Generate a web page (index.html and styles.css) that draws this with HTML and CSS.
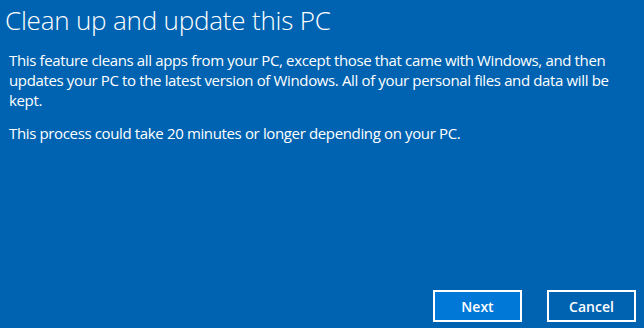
FILE: index.html
```html
<!DOCTYPE html>
<html>
<head>
    <title>Clean up and update this PC</title>
    <link rel="stylesheet" href="styles.css">
</head>
<body>
    <div class="dialog">
        <div class="content">
            <h1>Clean up and update this PC</h1>
            <p>This feature cleans all apps from your PC, except those that came with Windows, and then updates your PC to the latest version of Windows. All of your personal files and data will be kept.</p>
            <p>This process could take 20 minutes or longer depending on your PC.</p>
        </div>
        <div class="button-group">
            <button type="button" class="next-btn">Next</button>
            <button type="button" class="cancel-btn">Cancel</button>
        </div>
    </div>
</body>
</html>
```

FILE: styles.css
```css
html, body {
    margin: 0;
    padding: 0;
    height: 100%;
}
body {
    font-family: "Open Sans", "Noto Sans", sans-serif;
    background-color: #0063b1;
    color: #fff;
}
.dialog {
    display: flex;
    flex-direction: column;
    height: 100%;
    box-sizing: border-box;
}
.content {
    flex: 1;
    padding: 0 20px 0 9px;
}
h1 {
    font-weight: 300;
    font-size: 26px;
    line-height: 36px;
    margin: 2px 0 12px -4px;
    letter-spacing: -0.2px;
}
p {
    font-size: 15px;
    line-height: 20px;
    margin: 0 0 13px;
    letter-spacing: -0.36px;
}
.button-group {
    display: flex;
    justify-content: flex-end;
    gap: 25px;
    padding: 0 8px 6px 0;
}
button {
    width: 89px;
    height: 32px;
    border: 2px solid #fff;
    color: #fff;
    font-family: "Open Sans", "Noto Sans", sans-serif;
    font-size: 14px;
    font-weight: 600;
    cursor: pointer;
}
.next-btn {
    background-color: #0078d7;
}
.cancel-btn {
    background-color: #0063b1;
}
```
